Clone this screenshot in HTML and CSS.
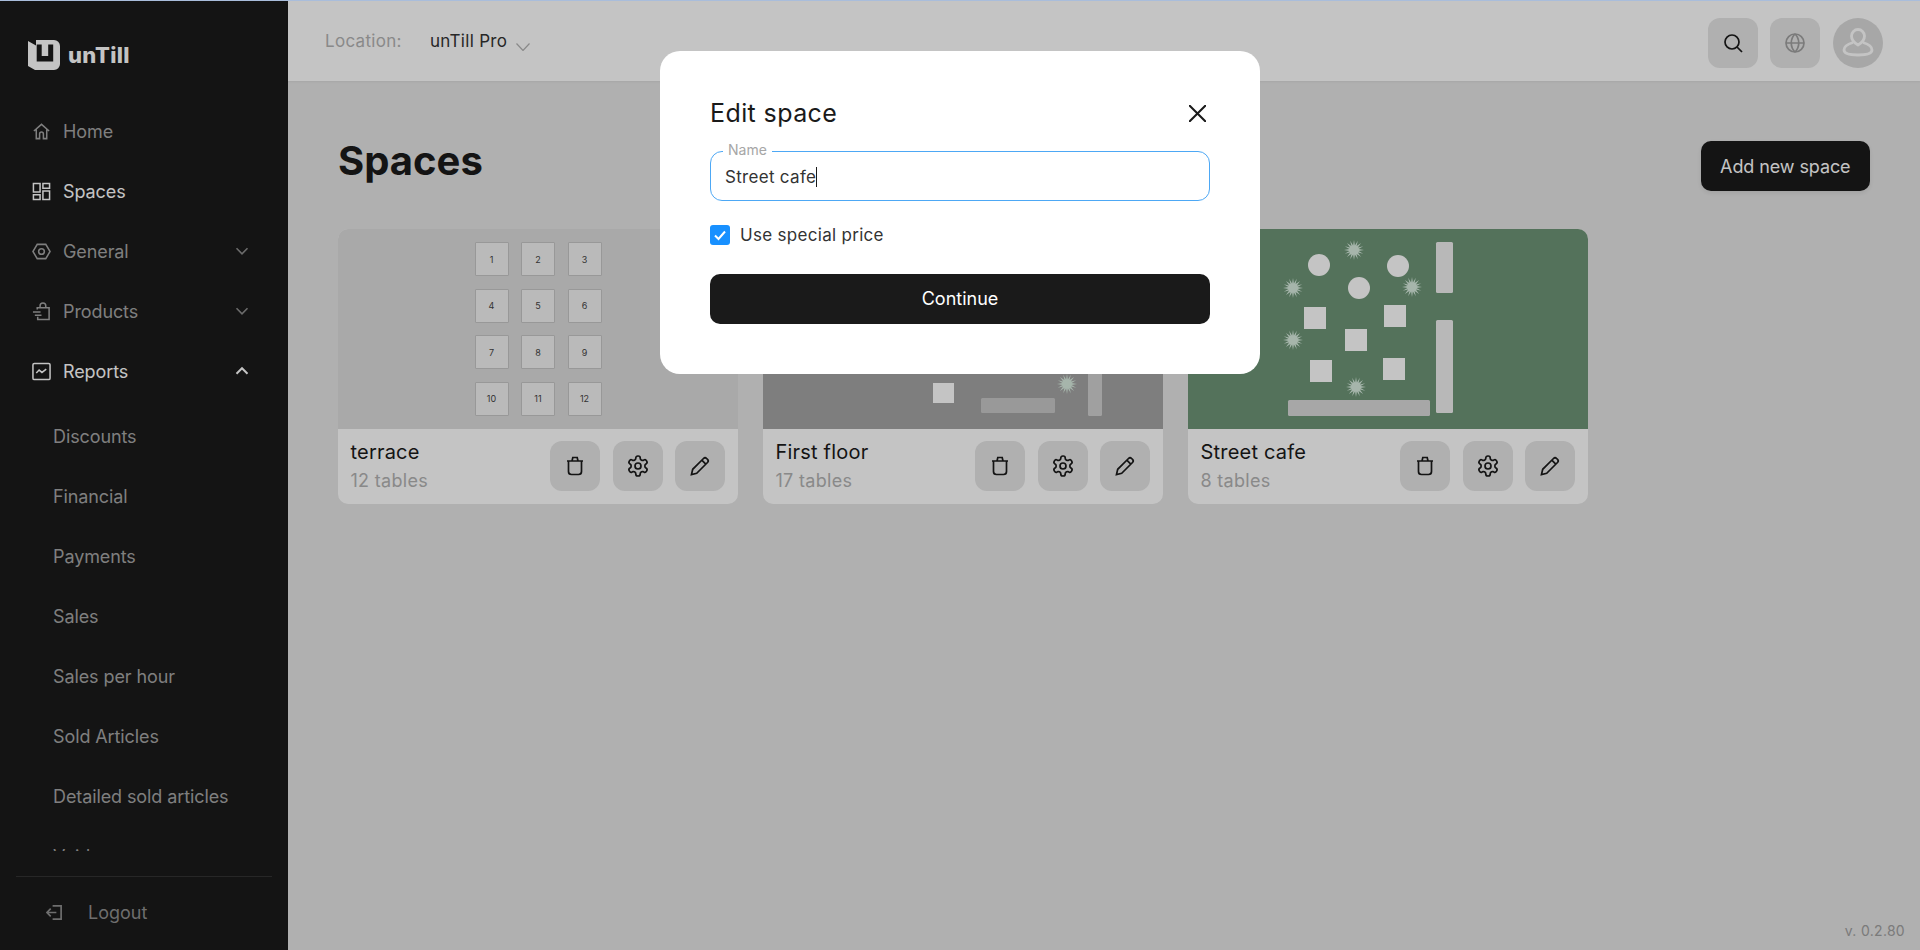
FILE: index.html
```html
<!DOCTYPE html>
<html lang="en">
<head>
  <meta charset="UTF-8" />
  <title>Spaces</title>
  <link rel="stylesheet" href="styles.css">
</head>
<body>

<svg class="sprites" width="0" height="0">
  <symbol id="i-trash" viewBox="0 0 24 24"><path d="M4 7h16M9 7l.8-3.500h4.400l.8 3.500M5.500 7v10.500a3 3 0 0 0 3 3h7a3 3 0 0 0 3-3V7"/></symbol>
  <symbol id="i-gear" viewBox="0 0 24 24"><path d="M12.220 2h-.44a2 2 0 0 0-2 2v.18a2 2 0 0 1-1 1.730l-.43.25a2 2 0 0 1-2 0l-.15-.08a2 2 0 0 0-2.730.73l-.22.38a2 2 0 0 0 .73 2.730l.15.1a2 2 0 0 1 1 1.720v.51a2 2 0 0 1-1 1.740l-.15.09a2 2 0 0 0-.73 2.730l.22.38a2 2 0 0 0 2.730.73l.15-.08a2 2 0 0 1 2 0l.43.25a2 2 0 0 1 1 1.730V20a2 2 0 0 0 2 2h.44a2 2 0 0 0 2-2v-.18a2 2 0 0 1 1-1.730l.43-.25a2 2 0 0 1 2 0l.15.08a2 2 0 0 0 2.730-.73l.22-.39a2 2 0 0 0-.73-2.730l-.15-.08a2 2 0 0 1-1-1.740v-.5a2 2 0 0 1 1-1.740l.15-.09a2 2 0 0 0 .73-2.730l-.22-.38a2 2 0 0 0-2.730-.73l-.15.08a2 2 0 0 1-2 0l-.43-.25a2 2 0 0 1-1-1.730V4a2 2 0 0 0-2-2z"/><circle cx="12" cy="12" r="3"/></symbol>
  <symbol id="i-pencil" viewBox="0 0 24 24"><path d="M3.500 20.500l1.200-5.200L15.500 4.500a2.200 2.200 0 0 1 3.100 0l.9.9a2.200 2.200 0 0 1 0 3.100L8.700 19.300zM13.800 6.200l4 4"/></symbol>
  <symbol id="i-down" viewBox="0 0 24 24"><path d="M6 9l6 6 6-6"/></symbol>
  <symbol id="plant" viewBox="-9 -9 18 18"><polygon class="plant-star" points="9,0 4.120,.82 8.310,3.440 3.490,2.330 6.360,6.360 2.330,3.490 3.440,8.310 .82,4.120 0,9 -.82,4.120 -3.440,8.310 -2.330,3.490 -6.360,6.360 -3.490,2.330 -8.310,3.440 -4.120,.82 -9,0 -4.120,-.82 -8.310,-3.440 -3.490,-2.330 -6.360,-6.360 -2.330,-3.490 -3.440,-8.310 -.82,-4.120 0,-9 .82,-4.120 3.440,-8.310 2.330,-3.490 6.360,-6.360 3.490,-2.330 8.310,-3.440 4.120,-.82"/></symbol>
</svg>

<div class="app">
  <!-- Sidebar -->
  <aside class="sidebar">
    <div class="logo">
      <svg class="logo-mark" viewBox="0 0 32 30">
        <path class="logo-block" d="M0 1l8 4.500V0h18a6 6 0 0 1 6 6v18a6 6 0 0 1-6 6H7l-7-4z"/>
        <path class="logo-cut" d="M8.700 4.500h5v11.500h6.500V4.500h5v17H8.700z"/>
      </svg>
      <span class="logo-text">unTill</span>
    </div>

    <nav class="nav">
      <a class="nav-item">
        <svg class="nav-icon" viewBox="0 0 20 20"><path d="M2 9.500L10 2.500l8 7M4.500 8v9.500h3.500v-5a2 2 0 0 1 4 0v5h3.500V8"/></svg>
        <span>Home</span>
      </a>
      <a class="nav-item active">
        <svg class="nav-icon" viewBox="0 0 20 20"><path d="M1.500 1.500h7v9h-7zM11.500 1.500h7v5h-7zM1.500 13.500h7v5h-7zM11.500 9.500h7v9h-7z"/></svg>
        <span>Spaces</span>
      </a>
      <a class="nav-item">
        <svg class="nav-icon" viewBox="0 0 20 20"><path d="M5.500 2.500h9L19 10l-4.500 7.500h-9L1 10z"/><circle cx="10" cy="10" r="3"/></svg>
        <span>General</span>
        <svg class="nav-chevron"><use href="#i-down"/></svg>
      </a>
      <a class="nav-item">
        <svg class="nav-icon" viewBox="0 0 20 20"><path d="M5.500 8V6h12.500v12.500H6v-3M8.500 6V4a3 3 0 0 1 6 0v2M1 10.500h8M3 14h7"/></svg>
        <span>Products</span>
        <svg class="nav-chevron"><use href="#i-down"/></svg>
      </a>
      <a class="nav-item active">
        <svg class="nav-icon" viewBox="0 0 20 20"><rect x="1" y="1.500" width="18" height="17" rx="1.500"/><path d="M4.500 11.500l3-3 3 2.500 4.500-3.500"/></svg>
        <span>Reports</span>
        <svg class="nav-chevron up"><use href="#i-down"/></svg>
      </a>
      <div class="subnav">
        <a class="sub-item">Discounts</a>
        <a class="sub-item">Financial</a>
        <a class="sub-item">Payments</a>
        <a class="sub-item">Sales</a>
        <a class="sub-item">Sales per hour</a>
        <a class="sub-item">Sold Articles</a>
        <a class="sub-item">Detailed sold articles</a>
        <a class="sub-item">Voids</a>
      </div>
    </nav>

    <div class="logout">
      <svg class="logout-icon" viewBox="0 0 18 18"><path d="M7 2h9v14H7M11 9H1M5 5L1 9l4 4"/></svg>
      <span>Logout</span>
    </div>
  </aside>

  <div class="main">
    <!-- Header -->
    <header class="header">
      <div class="location">
        <span class="location-label">Location:</span>
        <span class="location-value">unTill Pro</span>
        <svg class="location-chevron" viewBox="0 0 14 8"><path d="M.5.500 7 7.500 13.500.500"/></svg>
      </div>
      <div class="header-actions">
        <button class="square-btn">
          <svg class="btn-icon" viewBox="0 0 24 24"><circle cx="11" cy="11" r="7"/><path d="M16 16l5 5"/></svg>
        </button>
        <button class="square-btn muted">
          <svg class="btn-icon" viewBox="0 0 24 24"><circle cx="12" cy="12" r="9"/><path d="M3 12h18M12 3c-5 5-5 13 0 18M12 3c5 5 5 13 0 18"/></svg>
        </button>
        <div class="avatar">
          <svg viewBox="0 0 32 32"><path d="M16 3.500a6.500 6.500 0 0 1 6.500 6.500c0 3.500-3 7-6.500 9-3.500-2-6.500-5.500-6.500-9A6.500 6.500 0 0 1 16 3.500z"/><path d="M11 16.500c-5 1.500-9 4.500-9 7.500 0 3 4 5 14 5s14-2 14-5c0-3-4-6-9-7.500"/></svg>
        </div>
      </div>
    </header>

    <!-- Content -->
    <main class="content">
      <div class="page-head">
        <h1>Spaces</h1>
        <button class="add-btn">Add new space</button>
      </div>

      <div class="cards">
        <div class="card">
          <div class="plan plan-terrace">
            <div class="tables-grid">
              <div class="table">1</div><div class="table">2</div><div class="table">3</div>
              <div class="table">4</div><div class="table">5</div><div class="table">6</div>
              <div class="table">7</div><div class="table">8</div><div class="table">9</div>
              <div class="table">10</div><div class="table">11</div><div class="table">12</div>
            </div>
          </div>
          <div class="card-info">
            <div class="card-text">
              <div class="card-name">terrace</div>
              <div class="card-count">12 tables</div>
            </div>
            <div class="card-actions">
              <button class="square-btn"><svg class="btn-icon"><use href="#i-trash"/></svg></button>
              <button class="square-btn"><svg class="btn-icon"><use href="#i-gear"/></svg></button>
              <button class="square-btn"><svg class="btn-icon"><use href="#i-pencil"/></svg></button>
            </div>
          </div>
        </div>

        <div class="card">
          <div class="plan plan-floor">
            <svg class="plan-svg" viewBox="0 0 400 200">
              <rect class="wall" x="325" y="90" width="14" height="97" rx="1.500"/>
              <rect class="bar" x="218" y="169" width="74" height="15" rx="1.500"/>
              <rect class="square" x="170" y="154" width="21" height="20"/>
              <use href="#plant" x="294" y="145" width="20" height="20"/>
            </svg>
          </div>
          <div class="card-info">
            <div class="card-text">
              <div class="card-name">First floor</div>
              <div class="card-count">17 tables</div>
            </div>
            <div class="card-actions">
              <button class="square-btn"><svg class="btn-icon"><use href="#i-trash"/></svg></button>
              <button class="square-btn"><svg class="btn-icon"><use href="#i-gear"/></svg></button>
              <button class="square-btn"><svg class="btn-icon"><use href="#i-pencil"/></svg></button>
            </div>
          </div>
        </div>

        <div class="card">
          <div class="plan plan-cafe">
            <svg class="plan-svg" viewBox="0 0 400 200">
              <circle class="square" cx="131" cy="36" r="11"/>
              <circle class="square" cx="210" cy="37" r="11"/>
              <circle class="square" cx="171" cy="59" r="11"/>
              <rect class="square" x="116" y="78" width="22" height="22"/>
              <rect class="square" x="196" y="76" width="22" height="22"/>
              <rect class="square" x="157" y="100" width="22" height="22"/>
              <rect class="square" x="122" y="131" width="22" height="22"/>
              <rect class="square" x="195" y="129" width="22" height="22"/>
              <rect class="wall" x="248" y="13" width="17" height="51" rx="1.500"/>
              <rect class="wall" x="248" y="91" width="17" height="93" rx="1.500"/>
              <rect class="bar" x="100" y="171" width="142" height="16" rx="1.500"/>
              <use href="#plant" x="156" y="11" width="20" height="20"/>
              <use href="#plant" x="95" y="49" width="20" height="20"/>
              <use href="#plant" x="214" y="48" width="20" height="20"/>
              <use href="#plant" x="95" y="101" width="20" height="20"/>
              <use href="#plant" x="158" y="148" width="20" height="20"/>
            </svg>
          </div>
          <div class="card-info">
            <div class="card-text">
              <div class="card-name">Street cafe</div>
              <div class="card-count">8 tables</div>
            </div>
            <div class="card-actions">
              <button class="square-btn"><svg class="btn-icon"><use href="#i-trash"/></svg></button>
              <button class="square-btn"><svg class="btn-icon"><use href="#i-gear"/></svg></button>
              <button class="square-btn"><svg class="btn-icon"><use href="#i-pencil"/></svg></button>
            </div>
          </div>
        </div>
      </div>

      <div class="version">v. 0.2.80</div>
    </main>
  </div>
</div>

<!-- Modal -->
<div class="modal-overlay">
  <div class="modal">
    <div class="modal-head">
      <h3 class="modal-title">Edit space</h3>
      <svg class="modal-close" viewBox="2 2 14 14"><path d="M2 2l14 14M16 2L2 16"/></svg>
    </div>
    <div class="field">
      <span class="field-label">Name</span>
      <div class="field-input">Street cafe<span class="caret"></span></div>
    </div>
    <label class="check-row">
      <span class="check-box">
        <svg viewBox="0 0 20 20"><path d="M5 10.500l3.500 3.500L15 6.500"/></svg>
      </span>
      <span>Use special price</span>
    </label>
    <button class="continue-btn">Continue</button>
  </div>
</div>

</body>
</html>
```

FILE: styles.css
```css
/* Page */
* {
  box-sizing: border-box;
}

html,
body {
  height: 100%;
}

body {
  margin: 0;
  border-top: 1px solid #a9bddb;
  font-family: 'Inter', 'Liberation Sans', sans-serif;
  color: #1a1a1a;
  background: #e5e5e5;
  overflow: hidden;
}

button {
  font-family: inherit;
  border: none;
  cursor: pointer;
}

.sprites {
  position: absolute;
}

.app {
  display: flex;
  height: 949px;
}

/* Sidebar */
.sidebar {
  width: 288px;
  flex-shrink: 0;
  display: flex;
  flex-direction: column;
  background: #1a1a1a;
}

.logo {
  display: flex;
  align-items: center;
  gap: 8px;
  height: 39px;
  margin: 34px 0 0 28px;
}

.logo-mark {
  width: 32px;
  height: 30px;
}

.logo-block {
  fill: #fff;
}

.logo-cut {
  fill: #1a1a1a;
}

.logo-text {
  font-size: 22px;
  font-weight: 800;
  letter-spacing: 0.3px;
  color: #fff;
}

.nav {
  height: 750px;
  margin-top: 27px;
  overflow: hidden;
  flex-shrink: 0;
}

.nav-item {
  display: flex;
  align-items: center;
  height: 60px;
  padding: 0 35px 0 32px;
  font-size: 18px;
  letter-spacing: -0.1px;
  color: #a6a6a6;
}

.nav-item.active {
  color: #fff;
}

.nav-icon {
  width: 19px;
  height: 19px;
  margin-right: 12px;
  fill: none;
  stroke: currentColor;
  stroke-width: 1.6;
}

.nav-chevron {
  width: 22px;
  height: 22px;
  margin-left: auto;
  fill: none;
  stroke: #8c8c8c;
  stroke-width: 1.800;
}

.nav-chevron.up {
  stroke: #fff;
  stroke-width: 2.200;
  transform: rotate(180deg);
}

.subnav {
  padding-top: 5px;
}

.sub-item {
  display: flex;
  align-items: center;
  height: 60px;
  padding-left: 53px;
  font-size: 18px;
  letter-spacing: -0.1px;
  color: #a6a6a6;
}

.logout {
  display: flex;
  align-items: center;
  height: 72px;
  margin: 25px 16px 0;
  padding: 0 0 0 30px;
  border-top: 1px solid #333;
  font-size: 18px;
  color: #8f8f8f;
}

.logout-icon {
  width: 17px;
  height: 17px;
  margin-right: 25px;
  fill: none;
  stroke: currentColor;
  stroke-width: 1.800;
}

/* Header */
.main {
  flex: 1;
  min-width: 0;
  display: flex;
  flex-direction: column;
}

.header {
  height: 80px;
  flex-shrink: 0;
  display: flex;
  align-items: center;
  justify-content: space-between;
  padding: 0 37px;
  background: #fff;
  box-shadow: 0 1px 2px rgba(0, 0, 0, 0.06);
}

.location {
  display: flex;
  align-items: center;
  font-size: 17px;
  letter-spacing: 0.3px;
}

.location-label {
  width: 105px;
  color: #b3b3b3;
}

.location-value {
  color: #333;
}

.location-chevron {
  width: 14px;
  height: 8px;
  margin: 12px 0 0 9px;
  fill: none;
  stroke: #b3b3b3;
  stroke-width: 1.200;
}

.header-actions {
  display: flex;
  align-items: center;
  gap: 12px;
  margin-top: 4px;
}

.square-btn {
  width: 50px;
  height: 50px;
  display: flex;
  align-items: center;
  justify-content: center;
  padding: 0;
  border-radius: 12px;
  background: #e5e5e5;
  color: #1a1a1a;
}

.square-btn.muted {
  color: #a0a0a0;
}

.btn-icon {
  width: 24px;
  height: 24px;
  fill: none;
  stroke: currentColor;
  stroke-width: 1.700;
}

.avatar {
  width: 50px;
  height: 50px;
  display: flex;
  align-items: center;
  justify-content: center;
  margin-left: 1px;
  border-radius: 50%;
  background: #dadada;
}

.avatar svg {
  width: 32px;
  height: 32px;
  margin-top: -3px;
  fill: none;
  stroke: #fff;
  stroke-width: 2.800;
}

/* Content */
.content {
  flex: 1;
  position: relative;
  padding: 60px 50px 0;
}

.page-head {
  display: flex;
  align-items: center;
  justify-content: space-between;
  height: 50px;
}

h1 {
  margin: 0 0 12px;
  font-size: 40px;
  font-weight: 700;
  color: #1a1a1a;
}

.add-btn {
  height: 50px;
  padding: 0 19.500px;
  border-radius: 10px;
  background: #1a1a1a;
  color: #fff;
  font-size: 18px;
  letter-spacing: -0.1px;
  box-shadow: 0 2px 4px rgba(0, 0, 0, 0.08);
}

.cards {
  display: flex;
  gap: 25px;
  margin-top: 38px;
}

.card {
  width: 400px;
  border-radius: 10px;
  overflow: hidden;
  background: #fff;
}

.plan {
  height: 200px;
}

.plan-terrace {
  display: flex;
  align-items: center;
  justify-content: center;
  background: #dcdcdc;
}

.plan-floor {
  background: #a5a5a5;
}

.plan-cafe {
  background: #6e9577;
}

.plan-svg {
  display: block;
  width: 400px;
  height: 200px;
}

.tables-grid {
  display: grid;
  grid-template-columns: repeat(3, 34px);
  grid-auto-rows: 34px;
  gap: 12.500px 12.500px;
}

.table {
  display: flex;
  align-items: center;
  justify-content: center;
  border: 1px solid #c6c6c6;
  border-radius: 1px;
  background: #f2f2f2;
  font-size: 9px;
  color: #444;
}

.square {
  fill: #fff;
}

.wall {
  fill: #f0f0f0;
}

.bar {
  fill: #dadada;
}

.plan-floor .wall {
  fill: #d0d0d0;
}

.plan-floor .bar {
  fill: #c8c8c8;
}

.plant-star {
  fill: #d8ecdf;
}

.card-info {
  height: 75px;
  display: flex;
  align-items: flex-start;
  justify-content: space-between;
  padding: 12px 13px 0 12.500px;
}

.card-text {
  margin-top: -1.500px;
}

.card-name {
  font-size: 20px;
  letter-spacing: 0.2px;
  color: #1a1a1a;
}

.card-count {
  margin-top: 6px;
  font-size: 18px;
  letter-spacing: 0.3px;
  color: #b3b3b3;
}

.card-actions {
  display: flex;
  gap: 12.500px;
}

.version {
  position: absolute;
  right: 15px;
  bottom: 11px;
  font-size: 14px;
  letter-spacing: 0.3px;
  color: #a0a0a0;
}

/* Modal */
.modal-overlay {
  position: fixed;
  top: 1px;
  left: 0;
  right: 0;
  bottom: 0;
  z-index: 10;
  background: rgba(0, 0, 0, 0.23);
}

.modal {
  width: 600px;
  height: 323px;
  margin: 50px auto 0;
  padding: 50px;
  border-radius: 20px;
  background: #fff;
}

.modal-head {
  display: flex;
  align-items: center;
  justify-content: space-between;
  height: 24px;
}

.modal-title {
  margin: 0;
  font-size: 25px;
  font-weight: 400;
  letter-spacing: 0.4px;
  color: #1a1a1a;
}

.modal-close {
  width: 17px;
  height: 17px;
  margin-right: 4px;
  fill: none;
  stroke: #1a1a1a;
  stroke-width: 1.700;
}

.field {
  position: relative;
  margin-top: 26px;
}

.field-label {
  position: absolute;
  top: -9px;
  left: 13px;
  padding: 0 5px;
  background: #fff;
  font-size: 14px;
  line-height: 16px;
  color: #a6a6a6;
}

.field-input {
  display: flex;
  align-items: center;
  height: 50px;
  padding: 1px 14px 0;
  border: 1px solid #4da8f5;
  border-radius: 12px;
  font-size: 17px;
  letter-spacing: 0.3px;
  color: #333;
}

.caret {
  width: 1px;
  height: 20px;
  background: #1a1a1a;
}

.check-row {
  display: flex;
  align-items: center;
  gap: 10px;
  margin-top: 24px;
  height: 20px;
  font-size: 17px;
  letter-spacing: 0.3px;
  color: #333;
}

.check-box {
  width: 20px;
  height: 20px;
  border-radius: 3px;
  background: #1890ff;
}

.check-box svg {
  display: block;
  width: 20px;
  height: 20px;
  fill: none;
  stroke: #fff;
  stroke-width: 2;
}

.continue-btn {
  display: block;
  width: 100%;
  height: 50px;
  margin-top: 29px;
  padding: 0 0 2px;
  border-radius: 10px;
  background: #1a1a1a;
  color: #fff;
  font-size: 18px;
}
```
